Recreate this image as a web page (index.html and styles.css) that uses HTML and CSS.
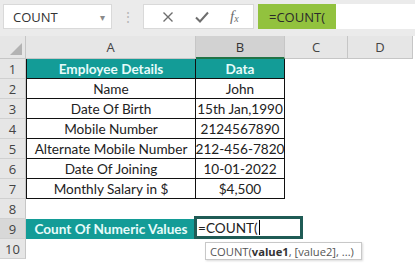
FILE: index.html
```html
<!DOCTYPE html>
<html>
<head>
<meta charset="utf-8">
<link rel="stylesheet" href="styles.css">
</head>
<body>
<div class="app">
  <div class="topbar">
    <div class="namebox"><span>COUNT</span><span class="caret">&#9662;</span></div>
    <div class="dots">&#8942;</div>
    <div class="fbtns">
      <svg class="ic" width="12" height="12" viewBox="0 0 12 12"><path d="M1.5 1.5 L10.5 10.5 M10.5 1.5 L1.5 10.5" stroke="#6e6e6e" stroke-width="1.4" fill="none"/></svg>
      <svg class="ic" width="14" height="12" viewBox="0 0 14 12"><path d="M1 6.5 L5 10.5 L13 1.5" stroke="#6e6e6e" stroke-width="2" fill="none"/></svg>
      <span class="fx"><i>f</i><sub>x</sub></span>
    </div>
    <div class="formula"><span class="fhl">=COUNT(</span></div>
  </div>
  <div class="sheet">
    <div class="grid">
      <div class="corner"><span class="tri"></span></div>
      <div class="ch">A</div>
      <div class="ch sel">B</div>
      <div class="ch">C</div>
      <div class="ch">D</div>

      <div class="rh">1</div><div class="c th bl">Employee Details</div><div class="c th br">Data</div><div class="c"></div><div class="c"></div>
      <div class="rh">2</div><div class="c td bl">Name</div><div class="c td br">John</div><div class="c"></div><div class="c"></div>
      <div class="rh">3</div><div class="c td bl">Date Of Birth</div><div class="c td br">15th Jan,1990</div><div class="c"></div><div class="c"></div>
      <div class="rh">4</div><div class="c td bl">Mobile Number</div><div class="c td br">2124567890</div><div class="c"></div><div class="c"></div>
      <div class="rh">5</div><div class="c td bl">Alternate Mobile Number</div><div class="c td br">212-456-7820</div><div class="c"></div><div class="c"></div>
      <div class="rh">6</div><div class="c td bl">Date Of Joining</div><div class="c td br">10-01-2022</div><div class="c"></div><div class="c"></div>
      <div class="rh">7</div><div class="c td bl last">Monthly Salary in $</div><div class="c td br last">$4,500</div><div class="c"></div><div class="c"></div>
      <div class="rh">8</div><div class="c"></div><div class="c"></div><div class="c"></div><div class="c"></div>
      <div class="rh rsel">9</div><div class="c th">Count Of Numeric Values</div><div class="c"></div><div class="c"></div><div class="c"></div>
      <div class="rh">10</div><div class="c"></div><div class="c"></div><div class="c"></div><div class="c"></div>
    </div>
    <div class="editbox">=COUNT(<span class="cursor"></span></div>
    <div class="tip">COUNT(<b>value1</b>, [value2], ...)</div>
  </div>
</div>
</body>
</html>
```
FILE: styles.css
```css
html, body { margin: 0; padding: 0; }
body { width: 415px; height: 264px; overflow: hidden; background: #ffffff; font-family: "Lato", "Open Sans", sans-serif; }
.app { width: 415px; height: 264px; display: flex; flex-direction: column; }
.topbar { height: 36px; background: #ebebeb; display: flex; align-items: flex-start; padding-top: 4px; box-sizing: border-box; }
.namebox { margin-left: 3px; width: 109px; height: 25px; background: #fff; box-sizing: border-box; border: 1px solid #d9d9d9; display: flex; align-items: center; justify-content: space-between; padding: 0 6px 0 9px; font-family: "Open Sans", sans-serif; font-size: 13px; color: #333; }
.caret { color: #8a8a8a; font-size: 10px; }
.dots { width: 31px; height: 25px; display: flex; align-items: center; justify-content: center; color: #b8b8b8; font-size: 14px; }
.fbtns { width: 111px; height: 25px; background: #fff; border: 1px solid #d9d9d9; box-sizing: border-box; display: flex; align-items: center; justify-content: space-around; padding: 0 4px 0 8px; }
.fx { font-family: "Liberation Serif", serif; font-size: 15px; color: #6e6e6e; }
.fx sub { font-size: 10px; font-style: italic; vertical-align: -1px; }
.formula { flex: 1; height: 25px; margin-left: 4px; background: #fff; display: flex; }
.fhl { background: #92c23e; width: 78px; height: 25px; display: flex; align-items: center; padding-left: 11px; box-sizing: border-box; font-family: "Open Sans", sans-serif; font-size: 13px; color: #2b2b2b; }
.sheet { position: relative; flex: 1; }
.grid { display: grid; grid-template-columns: 26px 170px 89px 63px 65px; grid-template-rows: 23px repeat(10, 20px); }
.corner { background: #e6e6e6; border-right: 1px solid #c6c6c6; border-bottom: 1px solid #c6c6c6; position: relative; }
.tri { position: absolute; left: 10px; top: 7px; width: 0; height: 0; border-style: solid; border-width: 0 0 12px 12px; border-color: transparent transparent #b3b3b3 transparent; }
.ch { background: #e6e6e6; border-right: 1px solid #c6c6c6; border-bottom: 1px solid #c6c6c6; display: flex; align-items: center; justify-content: center; font-family: "Open Sans", sans-serif; font-size: 13px; color: #444; }
.ch.sel { background: #d2d2d2; border-bottom: 2px solid #217346; color: #333; }
.rh { background: #e6e6e6; border-right: 1px solid #c6c6c6; border-bottom: 1px solid #d0d0d0; display: flex; align-items: center; justify-content: center; font-family: "Open Sans", sans-serif; font-size: 13px; color: #444; box-sizing: border-box; }
.rh.rsel { background: #d8d8d8; }
.c { box-sizing: border-box; display: flex; align-items: center; justify-content: center; font-size: 13.6px; color: #222; white-space: nowrap; }
.th { background: #139c97; color: #e6fbfa; font-weight: bold; }
.td { border-bottom: 1px solid #111; }
.bl { border-left: 1px solid #111; border-right: 1px solid #111; }
.br { border-right: 1px solid #111; }
.th.bl, .th.br { border-color: #111; border-bottom: 1px solid #111; }
.th.br { border-left: none; }
.editbox { position: absolute; left: 194px; top: 180px; width: 109px; height: 23px; box-sizing: border-box; border: 3px solid #1f5b55; background: #fff; display: flex; align-items: center; padding-left: 1px; font-size: 13.6px; color: #222; }
.cursor { display: inline-block; width: 1px; height: 15px; background: #000; margin-left: 1px; }
.tip { position: absolute; left: 205px; top: 206px; width: 157px; height: 18px; box-sizing: border-box; border: 1px solid #c8c8c8; background: #fff; display: flex; align-items: center; padding-left: 4px; font-family: "Open Sans", sans-serif; font-size: 11.2px; color: #555; box-shadow: 1px 1px 2px rgba(0,0,0,0.15); white-space: nowrap; }
.tip b { color: #333; }
```
